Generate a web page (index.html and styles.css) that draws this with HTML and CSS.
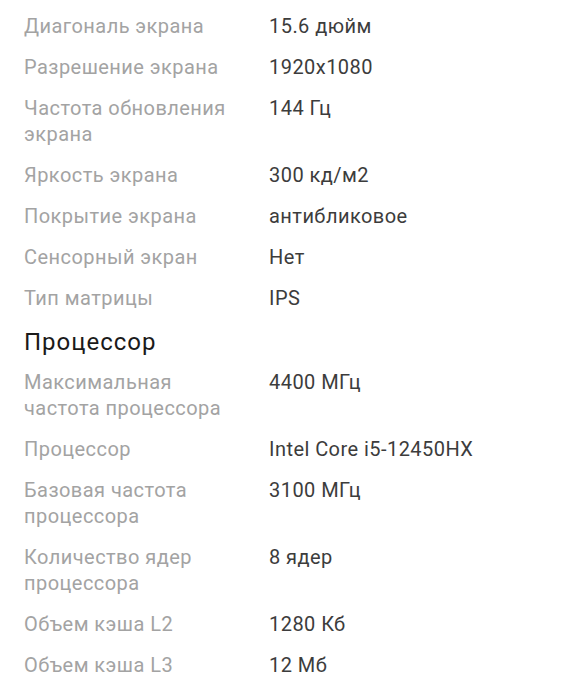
FILE: index.html
```html
<!DOCTYPE html>
<html lang="ru">
<head>
<meta charset="utf-8">
<link rel="stylesheet" href="styles.css">
</head>
<body>
<div class="page">
  <div class="specs">
    <div class="label">Диагональ экрана</div><div class="value">15.6 дюйм</div>
    <div class="label">Разрешение экрана</div><div class="value">1920x1080</div>
    <div class="label">Частота обновления экрана</div><div class="value">144 Гц</div>
    <div class="label">Яркость экрана</div><div class="value">300 кд/м2</div>
    <div class="label">Покрытие экрана</div><div class="value">антибликовое</div>
    <div class="label">Сенсорный экран</div><div class="value">Нет</div>
    <div class="label">Тип матрицы</div><div class="value">IPS</div>
  </div>
  <h2 class="section">Процессор</h2>
  <div class="specs">
    <div class="label">Максимальная частота процессора</div><div class="value">4400 МГц</div>
    <div class="label">Процессор</div><div class="value">Intel Core i5-12450HX</div>
    <div class="label">Базовая частота процессора</div><div class="value">3100 МГц</div>
    <div class="label">Количество ядер процессора</div><div class="value">8 ядер</div>
    <div class="label">Объем кэша L2</div><div class="value">1280 Кб</div>
    <div class="label">Объем кэша L3</div><div class="value">12 Мб</div>
  </div>
</div>
</body>
</html>
```

FILE: styles.css
```css
html, body {
  margin: 0;
  padding: 0;
  background: #fff;
}
body {
  font-family: Roboto, "Noto Sans", sans-serif;
}
.page {
  padding: 13px 24px 0 24px;
}
.specs {
  display: grid;
  grid-template-columns: 245px 1fr;
  row-gap: 15px;
  font-size: 20px;
  line-height: 26px;
  letter-spacing: 0.45px;
}
.label {
  color: #a3a3a3;
  padding-right: 20px;
}
.value {
  color: #3c3c3c;
}
.section {
  margin: 16px 0 12px 0;
  font-size: 24px;
  line-height: 30px;
  letter-spacing: 1px;
  font-weight: 400;
  color: #1a1a1a;
}
```
